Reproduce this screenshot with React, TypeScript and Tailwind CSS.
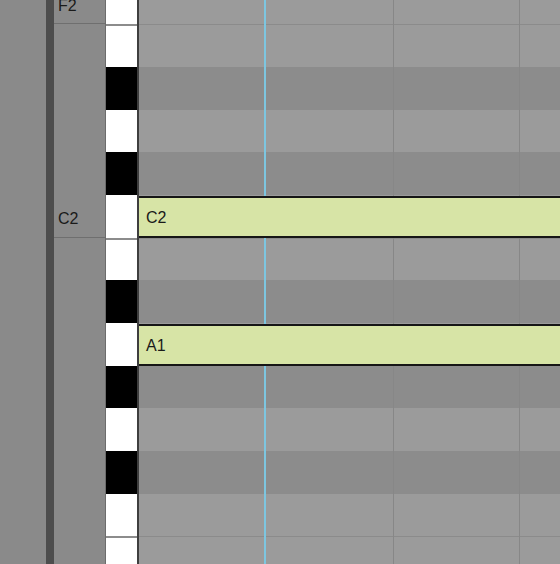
import React from "react";

type Row = { name: string; black: boolean; label?: boolean; note?: boolean };

const rows: Row[] = [
  { name: "F2", black: false, label: true },
  { name: "E2", black: false },
  { name: "D#2", black: true },
  { name: "D2", black: false },
  { name: "C#2", black: true },
  { name: "C2", black: false, label: true, note: true },
  { name: "B1", black: false },
  { name: "A#1", black: true },
  { name: "A1", black: false, note: true },
  { name: "G#1", black: true },
  { name: "G1", black: false },
  { name: "F#1", black: true },
  { name: "F1", black: false },
  { name: "E1", black: false },
];

const isSplitTop = (n: string) => n.startsWith("E") || n.startsWith("B");

export default function App() {
  return (
    <div
      className="flex h-[564px] w-[560px] overflow-hidden bg-[#8a8a8a] text-[16px] text-[#1a1a1a]"
      style={{ fontFamily: '"Liberation Sans", Arial, sans-serif' }}
    >
      {/* left gutter */}
      <div className="w-[46px] shrink-0 bg-[#8a8a8a]" />
      {/* dark stripe */}
      <div className="w-[8px] shrink-0 bg-[#4d4d4d]" />

      {/* labels column */}
      <div className="flex w-[51px] shrink-0 flex-col -mt-[18.333px]">
        {rows.map((r) => (
          <div
            key={r.name}
            className={
              r.label
                ? "flex h-[42.667px] shrink-0 items-center border-b border-[#6f6f6f] pl-[4px] pt-[7px]"
                : "h-[42.667px] shrink-0"
            }
          >
            {r.label ? r.name : null}
          </div>
        ))}
      </div>

      {/* piano keys */}
      <div className="flex w-[34px] shrink-0 flex-col border-l border-r-2 border-l-[#6c6c6c] border-r-[#3e3e3e] -mt-[18.333px]">
        {rows.map((r) => (
          <div
            key={r.name}
            className={
              r.black
                ? "h-[42.667px] shrink-0 bg-black"
                : isSplitTop(r.name)
                ? "h-[42.667px] shrink-0 border-t-2 border-[#8c8c8c] bg-white"
                : "h-[42.667px] shrink-0 bg-white"
            }
          />
        ))}
      </div>

      {/* note grid */}
      <div className="relative flex-1">
        <div className="flex flex-col -mt-[18.333px]">
          {rows.map((r) => (
            <div
              key={r.name}
              className={
                r.black
                  ? "flex h-[42.667px] shrink-0 flex-col bg-[#8c8c8c]"
                  : isSplitTop(r.name)
                  ? "flex h-[42.667px] shrink-0 flex-col border-t border-[#8b8b8b] bg-[#9b9b9b]"
                  : "flex h-[42.667px] shrink-0 flex-col bg-[#9b9b9b]"
              }
            >
              {r.note ? (
                <div className="relative z-10 mt-[1px] flex h-[41.667px] items-center border-y-2 border-[#161616] bg-[#d7e4a6] pl-[7px] pt-[3px]">
                  {r.name}
                </div>
              ) : null}
            </div>
          ))}
        </div>
        {/* vertical grid lines */}
        <div className="absolute inset-y-0 left-[125px] w-[2px] bg-[#7dc6e0]" />
        <div className="absolute inset-y-0 left-[254px] w-px bg-[#878787]" />
        <div className="absolute inset-y-0 left-[380px] w-px bg-[#878787]" />
      </div>
    </div>
  );
}
